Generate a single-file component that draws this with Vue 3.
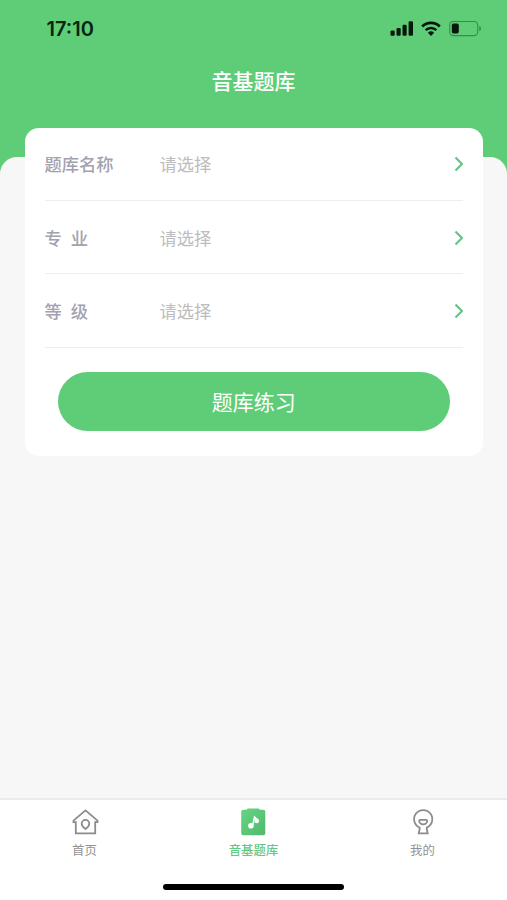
<script setup>
import { ref } from "vue";

const time = "17:10"

const fields = ref([
    { id: "bank", label: "题库名称", placeholder: "请选择" },
    { id: "major", label: "专 业", placeholder: "请选择" },
    { id: "level", label: "等 级", placeholder: "请选择" }
])

const tabs = [
    { id: "home", label: "首页" },
    { id: "bank", label: "音基题库" },
    { id: "mine", label: "我的" }
]

const activeTab = ref("bank")
</script>


<template>
    <div class="page">
        <!-- STATUS BAR -->
        <div class="status-bar">
            <span class="time">{{ time }}</span>
            <div class="status-icons">
                <svg class="signal" width="23" height="15" viewBox="0 0 23 15">
                    <rect x="0.5" y="9.5" width="4.2" height="5.2" rx="1.2" />
                    <rect x="6.5" y="7" width="4.2" height="7.7" rx="1.2" />
                    <rect x="12.5" y="3.8" width="4.2" height="10.9" rx="1.2" />
                    <rect x="18.6" y="0.3" width="4.4" height="14.4" rx="1.2" />
                </svg>
                <svg class="wifi" width="20" height="15" viewBox="0 0 20 15">
                    <path d="M1.2 5.4a12.6 12.6 0 0 1 17.6 0" fill="none" stroke="#06180b" stroke-width="2.8" />
                    <path d="M4.7 9.1a7.6 7.6 0 0 1 10.6 0" fill="none" stroke="#06180b" stroke-width="2.5" />
                    <path d="M10 14.9 6.9 11.7a4.5 4.5 0 0 1 6.2 0z" />
                </svg>
                <svg class="battery" width="33" height="16" viewBox="0 0 33 16">
                    <rect x="0.7" y="0.4" width="28" height="14.2" rx="3.8" fill="none" stroke="#3d8a50" stroke-width="1.1" />
                    <rect x="2.8" y="2.4" width="7" height="10.2" rx="1.8" />
                    <path d="M30.2 4.9c2.4.9 2.4 4.3 0 5.2z" fill="#3d8a50" />
                </svg>
            </div>
        </div>

        <h1 class="title">音基题库</h1>

        <!-- CONTENT -->
        <div class="content">
            <div class="card">
                <div v-for="field in fields" :key="field.id" class="field">
                    <span class="field-label">{{ field.label }}</span>
                    <span class="field-value">{{ field.placeholder }}</span>
                    <svg class="arrow" width="9" height="16" viewBox="0 0 9 16">
                        <path d="M1.5 1.5 8 8l-6.5 6.5" />
                    </svg>
                </div>
                <button type="button" class="practice-button">题库练习</button>
            </div>
        </div>

        <!-- TAB BAR -->
        <div class="tab-bar">
            <div class="tabs">
                <div
                    v-for="tab in tabs"
                    :key="tab.id"
                    class="tab"
                    :class="{ active: tab.id === activeTab }"
                    @click="activeTab = tab.id"
                >
                    <svg v-if="tab.id === 'home'" class="tab-icon" viewBox="0 0 28 28">
                        <path d="M2.5 14.2v-1.6L14.5 2.4l12 10.2v1.6h-2.3v11.2H4.8V14.2z" />
                        <path d="M14.5 20.9c-2.5-1.7-3.8-3.3-3.8-5.2a3.8 3.8 0 0 1 7.6 0c0 1.900-1.300 3.500-3.800 5.200z" />
                    </svg>
                    <svg v-else-if="tab.id === 'bank'" class="tab-icon" viewBox="0 0 28 28">
                        <defs>
                            <linearGradient id="book" x1="0" y1="0" x2="1" y2="1">
                                <stop offset="0" stop-color="#65d583" />
                                <stop offset="1" stop-color="#51b96c" />
                            </linearGradient>
                        </defs>
                        <path class="solid" fill="url(#book)" d="M3.2 1.8h3.3L7.8.4h10.800l1.400 1.400h3.300a2 2 0 0 1 2 2v21.500a2 2 0 0 1-2 2H3.200a2 2 0 0 1-2-2V3.800a2 2 0 0 1 2-2z" />
                        <circle class="note" cx="10.9" cy="17.8" r="2.8" />
                        <circle class="note" cx="16.8" cy="13" r="2.3" />
                        <path class="note-stem" d="M12.8 17.2 14.5 9l3.3 3.1" />
                    </svg>
                    <svg v-else class="tab-icon" viewBox="0 0 28 28">
                        <path d="M10.6 19.5a9.1 9.1 0 1 1 7.2 0v2l.9 3.8h-9l.9-3.800z" />
                        <path d="M11.200 11.800h6a1 1 0 0 1 1 1 4 3.600 0 0 1-8 0 1 1 0 0 1 1-1z" />
                    </svg>
                    <span class="tab-label">{{ tab.label }}</span>
                </div>
            </div>
            <div class="home-indicator"></div>
        </div>
    </div>
</template>


<style>
body {
  margin: 0;
}
</style>

<style scoped>
.page {
  display: flex;
  flex-direction: column;
  height: 900px;
  overflow: hidden;
  background-color: #5fcd77;
  font-family: "Noto Sans CJK SC", sans-serif;
}

.status-bar {
  display: flex;
  align-items: center;
  justify-content: space-between;
  height: 57px;
  padding: 0 25px 0 46.5px;
  flex-shrink: 0;
}

.time {
  font-family: Inter, sans-serif;
  font-size: 20px;
  font-weight: 600;
  color: #06260e;
}

.status-icons {
  display: flex;
  align-items: center;
  gap: 8px;
  fill: #06180b;
}

.title {
  height: 48px;
  margin: 0 0 52px;
  line-height: 47px;
  font-size: 21px;
  font-weight: 500;
  text-align: center;
  color: #fff;
}

.content {
  flex: 1;
  padding: 0 24.5px 0 25px;
  border-radius: 17px 17px 0 0;
  background-color: #f7f7f7;
}

.card {
  box-sizing: border-box;
  height: 328px;
  margin-top: -29.5px;
  padding: 0 19.5px;
  border-radius: 14px;
  background-color: #fff;
}

.field {
  display: flex;
  align-items: center;
  box-sizing: border-box;
  height: 73.4px;
  border-bottom: 1.5px solid #eee;
  font-size: 17.3px;
}

.field-label {
  width: 115px;
  font-weight: 500;
  color: #a2a2af;
  word-spacing: 5px;
}

.field-value {
  flex: 1;
  color: #bdbdbd;
}

.arrow {
  margin-top: 1px;
  fill: none;
  stroke: #66c586;
  stroke-width: 2.2;
}

.practice-button {
  display: block;
  width: 392px;
  height: 59px;
  margin: 24.5px auto 0;
  padding: 0 0 2px;
  border: none;
  border-radius: 30px;
  background-color: #5fcd77;
  font-family: inherit;
  font-size: 21px;
  color: #fff;
  cursor: pointer;
}

.tab-bar {
  display: flex;
  flex-direction: column;
  align-items: center;
  box-sizing: border-box;
  height: 102px;
  border-top: 2px solid #ebebeb;
  background-color: #fff;
  flex-shrink: 0;
}

.tabs {
  display: flex;
  width: 100%;
  height: 84px;
}

.tab {
  display: flex;
  flex: 1;
  flex-direction: column;
  align-items: center;
  padding-top: 8px;
  color: #929292;
  cursor: pointer;
}

.tab-icon {
  width: 28px;
  height: 28px;
  fill: none;
  stroke: #8c8c8c;
  stroke-width: 1.8;
}

.solid {
  stroke: none;
}

.note {
  fill: #fff;
  stroke: none;
}

.note-stem {
  stroke: #fff;
  stroke-width: 1.6;
}

.tab-label {
  margin-top: 5px;
  font-size: 12.4px;
  line-height: 18px;
}

.active .tab-label {
  font-weight: 500;
  color: #62c982;
}

.home-indicator {
  width: 181px;
  height: 6px;
  border-radius: 3px;
  background-color: #000;
}
</style>
